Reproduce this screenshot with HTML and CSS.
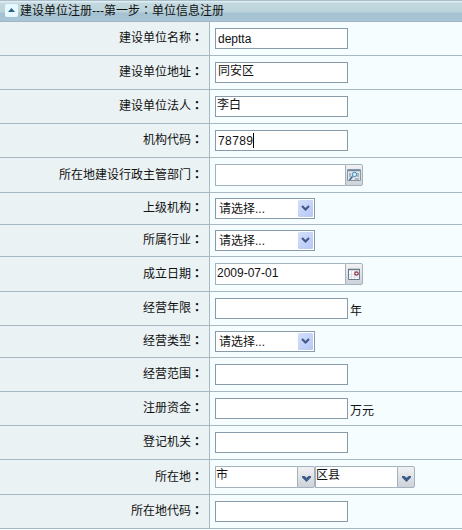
FILE: index.html
```html
<!DOCTYPE html>
<html lang="zh-CN">
<head>
  <meta charset="UTF-8">
  <title>单位信息注册</title>
  <link rel="stylesheet" href="styles.css">
</head>
<body>
  <div class="panel-header">
    <span class="toggle"><svg width="13" height="13" viewBox="0 0 13 13"><path d="M6.5 4L10 8H3z" fill="#2c6382"/></svg></span>
    <span>建设单位注册---第一步<span class="colon" lang="zh-TW">：</span>单位信息注册</span>
  </div>

  <form class="form">
    <div class="row">
      <div class="label">建设单位名称<b class="colon" lang="zh-TW">：</b></div>
      <div class="field"><div class="input latin">deptta</div></div>
    </div>
    <div class="row">
      <div class="label">建设单位地址<b class="colon" lang="zh-TW">：</b></div>
      <div class="field"><div class="input">同安区</div></div>
    </div>
    <div class="row">
      <div class="label">建设单位法人<b class="colon" lang="zh-TW">：</b></div>
      <div class="field"><div class="input person">李白</div></div>
    </div>
    <div class="row">
      <div class="label">机构代码<b class="colon" lang="zh-TW">：</b></div>
      <div class="field"><div class="input latin code">78789<span class="caret"></span></div></div>
    </div>
    <div class="row tall">
      <div class="label">所在地建设行政主管部门<b class="colon" lang="zh-TW">：</b></div>
      <div class="field">
        <div class="combo">
          <div class="combo-text"></div>
          <div class="combo-button">
            <svg width="14" height="14" viewBox="0 0 14 14">
              <path d="M.5 1.5h13v11H.5z" fill="#dfe5ea" stroke="#8796a5"/>
              <path d="M1 2.500h12" stroke="#708aa5" stroke-width="1.500"/>
              <path d="M2 6h2M2 8h2M10 6h2M10 8h2M8 11h4" stroke="#7c8995"/>
              <circle cx="7.500" cy="6.500" r="2.200" fill="#c9efff" stroke="#4486b5"/>
              <path d="M5.500 8.500L2.500 12" stroke="#3c688d" stroke-width="1.500"/>
            </svg>
          </div>
        </div>
      </div>
    </div>
    <div class="row short">
      <div class="label">上级机构<b class="colon" lang="zh-TW">：</b></div>
      <div class="field">
        <div class="select">请选择...<span class="select-button"><svg width="9" height="7" viewBox="0 0 9 7"><path d="M1 1l3.5 3.5L8 1" fill="none" stroke="#435987" stroke-width="2.2"/></svg></span></div>
      </div>
    </div>
    <div class="row short">
      <div class="label">所属行业<b class="colon" lang="zh-TW">：</b></div>
      <div class="field">
        <div class="select">请选择...<span class="select-button"><svg width="9" height="7" viewBox="0 0 9 7"><path d="M1 1l3.5 3.5L8 1" fill="none" stroke="#435987" stroke-width="2.2"/></svg></span></div>
      </div>
    </div>
    <div class="row tall">
      <div class="label">成立日期<b class="colon" lang="zh-TW">：</b></div>
      <div class="field">
        <div class="combo">
          <div class="combo-text date">2009-07-01</div>
          <div class="combo-button">
            <svg width="14" height="14" viewBox="0 0 14 14">
              <path d="M1.5 2.5h11v10h-11z" fill="#fff" stroke="#68798e"/>
              <path d="M1 2.500h12" stroke="#68798e" stroke-width="1.500"/>
              <path d="M2 7.5h10M2 10h10M4.500 4v8M7.500 4v8" stroke="#d6dde6"/>
              <circle cx="9.500" cy="6.500" r="1.700" fill="#fff" stroke="#8e2635" stroke-width="1.200"/>
            </svg>
          </div>
        </div>
      </div>
    </div>
    <div class="row">
      <div class="label">经营年限<b class="colon" lang="zh-TW">：</b></div>
      <div class="field"><div class="input"></div><span class="unit">年</span></div>
    </div>
    <div class="row short">
      <div class="label">经营类型<b class="colon" lang="zh-TW">：</b></div>
      <div class="field">
        <div class="select">请选择...<span class="select-button"><svg width="9" height="7" viewBox="0 0 9 7"><path d="M1 1l3.5 3.5L8 1" fill="none" stroke="#435987" stroke-width="2.2"/></svg></span></div>
      </div>
    </div>
    <div class="row">
      <div class="label">经营范围<b class="colon" lang="zh-TW">：</b></div>
      <div class="field"><div class="input"></div></div>
    </div>
    <div class="row">
      <div class="label">注册资金<b class="colon" lang="zh-TW">：</b></div>
      <div class="field"><div class="input"></div><span class="unit">万元</span></div>
    </div>
    <div class="row">
      <div class="label">登记机关<b class="colon" lang="zh-TW">：</b></div>
      <div class="field"><div class="input"></div></div>
    </div>
    <div class="row tall">
      <div class="label">所在地<b class="colon" lang="zh-TW">：</b></div>
      <div class="field">
        <div class="combo area">
          <div class="combo-text">市</div>
          <div class="combo-button"><svg width="9" height="6" viewBox="0 0 9 6"><path d="M0 0h2.500l2 1.800L6.500 0H9v1.500L4.500 6 0 1.500z" fill="#3f5c8c"/></svg></div>
        </div>
        <div class="combo area">
          <div class="combo-text">区县</div>
          <div class="combo-button"><svg width="9" height="6" viewBox="0 0 9 6"><path d="M0 0h2.500l2 1.800L6.500 0H9v1.500L4.500 6 0 1.500z" fill="#3f5c8c"/></svg></div>
        </div>
      </div>
    </div>
    <div class="row">
      <div class="label">所在地代码<b class="colon" lang="zh-TW">：</b></div>
      <div class="field"><div class="input"></div></div>
    </div>
  </form>
</body>
</html>
```
FILE: styles.css
```css
* {
  box-sizing: border-box;
}

body {
  margin: 0;
  background-color: #f5fdfe;
  font-family: "Liberation Sans", "Noto Sans CJK SC", sans-serif;
  font-size: 12px;
  line-height: 16px;
  color: #111;
  overflow: hidden;
}

svg {
  display: block;
}

.panel-header {
  display: flex;
  height: 22px;
  padding: 3px 0 0 5px;
  gap: 2px;
  border-bottom: 1px solid #9fb7c5;
  background: linear-gradient(#a9bec9 0, #a9bec9 1px, #dfedf2 1px, #dfedf2 2px, #c3d9df 3px, #bbd3da 12px, #a5c2d3 13px, #a9c5d6 100%);
}

.toggle {
  width: 13px;
  height: 13px;
  margin-top: 1px;
  border-radius: 2px;
  background-color: #e6f8ff;
}

.colon {
  font-family: "Noto Sans CJK TC", sans-serif;
  line-height: 1;
}

.row {
  display: flex;
  height: 34px;
  border-bottom: 1px solid #a9b9c3;
}

.row.tall {
  height: 35px;
}

.row.short {
  height: 32px;
}

.label {
  width: 210px;
  padding: 8px 6px 0 0;
  border-right: 1px solid #a9b9c3;
  background-color: #eaf2f4;
  text-align: right;
  white-space: nowrap;
}

.tall .label {
  padding-top: 9px;
}

.short .label {
  padding-top: 7px;
}

.field {
  flex: 1;
  display: flex;
  align-items: flex-start;
  padding: 6px 0 0 5px;
}

.short .field {
  padding-top: 5px;
}

.input {
  display: flex;
  width: 133px;
  height: 21px;
  padding-left: 2px;
  border: 1px solid #879bab;
  background-color: #fff;
}

.person {
  padding-left: 1px;
}

.latin {
  padding-top: 2px;
}

.code {
  letter-spacing: 0.4px;
}

.caret {
  width: 1px;
  height: 15px;
  background-color: #000;
}

.unit {
  margin: 5px 0 0 2px;
}

.select {
  display: flex;
  justify-content: space-between;
  width: 100px;
  height: 21px;
  padding: 1px 1px 1px 3px;
  border: 1px solid #879bab;
  background-color: #fff;
  line-height: 18px;
}

.select-button {
  display: flex;
  align-items: center;
  justify-content: center;
  width: 15px;
  border-radius: 1px;
  background: linear-gradient(135deg, #d5dffc, #b5c7f4);
}

.combo {
  display: flex;
  width: 148px;
  height: 22px;
}

.combo-text {
  flex: 1;
  border: 1px solid #a2b3bf;
  border-right: none;
  background-color: #fff;
}

.date {
  padding: 1px 0 0 1px;
}

.combo-button {
  display: flex;
  align-items: center;
  justify-content: center;
  width: 18px;
  border: 1px solid #a2b3bf;
  border-radius: 0 2px 2px 0;
  background: linear-gradient(#f2f2f4, #dfe2e6 50%, #cdd2d9);
}

.area {
  width: 100px;
}

.area .combo-button {
  padding-top: 3px;
}
```
